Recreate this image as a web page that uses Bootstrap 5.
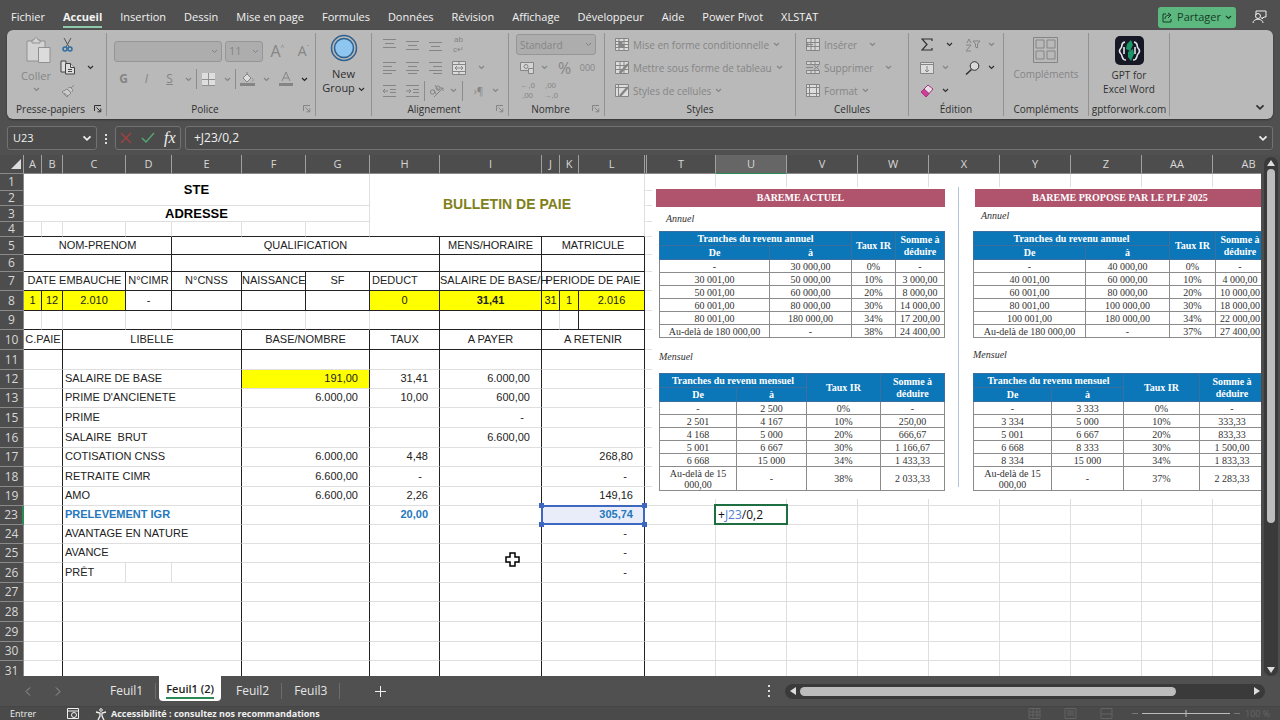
<!DOCTYPE html>
<html lang="fr">
<head>
<meta charset="utf-8">
<meta name="viewport" content="width=device-width, initial-scale=1">
<title>Bulletin de paie</title>
<link href="https://cdn.jsdelivr.net/npm/bootstrap@5.3.0/dist/css/bootstrap.min.css" rel="stylesheet">
<style>
:root{--chrome:#505050;--ribbon:#b9b9b9;--ink:#303030;--off:#858585}
body{background:var(--chrome);font-family:"Open Sans","Noto Sans",sans-serif;font-size:11px;line-height:14px;color:#f0f0f0}
button{font:inherit;color:inherit;background:none;border:0;padding:0;display:inline-flex;align-items:center;justify-content:center;flex:none}
svg{display:block;flex:none}
svg.ln{fill:none;stroke:currentColor}
.tabbar{height:30px;padding:4px 13px 0 11px}
.menu-links{gap:18px}
.menu-links a{color:#f2f2f2;text-decoration:none;white-space:nowrap;padding:3px 0 2px;border-bottom:2px solid transparent}
.menu-links a.active{font-weight:700;border-color:#8fc9ab}
.share{background:#5cb87e;color:#173d28;border-radius:3px;height:21px;width:78px;gap:4px}
.ribbon{background:var(--ribbon);border-radius:6px;margin:0 7px;height:89px;padding-top:3px;color:var(--ink);box-shadow:0 1px 2px #333;font-size:10px}
.rgroup{height:83px;border-right:1px solid #929292;display:flex;flex-direction:column;flex:none}
.gbody{height:69px;display:flex;flex:none}
.gtitle{height:14px;display:flex;align-items:center;line-height:14px;flex:none}
.gtitle span{flex:1;text-align:center;white-space:nowrap}
.gtitle svg{margin-right:4px}
.rrow{height:23px;display:flex;align-items:center}
.slot{width:23px;height:20px}
.car{width:15px;height:20px}
.vsep{width:1px;height:20px;background:#8c8c8c}
.off{color:var(--off)}
.tiny{font:8px/10px "Liberation Sans",sans-serif}
.combo{appearance:none;border:1px solid #969696;border-radius:3px;background:#adadad url("data:image/svg+xml,%3Csvg xmlns='http://www.w3.org/2000/svg' width='7' height='5'%3E%3Cpath d='M1 1l2.500 2.500L6 1' fill='none' stroke='%23808080'/%3E%3C/svg%3E") no-repeat right 3px center;height:21px;font:inherit;color:#858585;padding:0 3px;opacity:1}
.txtbtn{gap:4px;white-space:nowrap;justify-content:flex-start}
.bigbtn{flex-direction:column;justify-content:flex-start;line-height:14px}
.fbar{padding:7px 7px 0;height:36px}
.fbox{height:24px;border:1px solid #727272;border-radius:3px;background:#4b4b4b;display:flex;align-items:center}
.fbox input{background:none;border:0;color:#f0f0f0;font-size:12px;font-family:inherit;padding:0;outline:0;min-width:0}
.work{flex:1;min-height:0}
.sheet{position:relative;overflow:hidden;background:#fff;flex:1;min-width:0}
table.grid{table-layout:fixed;border-collapse:separate;border-spacing:0;width:1285px;font:11px/13px "Liberation Sans",Arial,sans-serif;color:#222}
.grid td,.grid th{padding:0;border-right:1px solid #dfdfdf;border-bottom:1px solid #dfdfdf;white-space:nowrap;text-align:center;vertical-align:middle}
.grid td{padding-bottom:1px}
.grid th{background:#4d4d4d;color:#d8d8d8;font:12px/12px "Open Sans","Noto Sans",sans-serif;border-color:#8a8a8a}
.grid thead th{font-size:11px;border-right-color:#a0a0a0;border-bottom-color:#8a8a8a}
.grid td.kr{border-right-color:#222}
.grid td.kb{border-bottom-color:#222}
.grid td.nr{border-right-color:#fff}
.grid td.yl{background:#ff0}
.grid td.lt{text-align:left;padding-left:2px}
.grid td.lt0{text-align:left}
.grid td.rt{text-align:right;padding-right:11px}
.grid td.ds{text-align:right;padding-right:17px}
.grid td.blu{color:#2478bd;font-weight:700}
.grid td.ttl{color:#000;font-size:13px;font-weight:700}
.grid td.bul{color:#80801a;font-size:14px;font-weight:700}
.grid th.cur{background:#666;border-bottom-color:#2c8a55}
.grid th.rcur{border-right:2px solid #2c8a55}
.grid td.ref{position:relative;background:#e8edf9}
.grid td.ref::before{content:"";position:absolute;inset:-1px;border:2px solid #3e68c0}
.knob{position:absolute;width:5px;height:5px;background:#3e68c0}
.grid td.edit{position:relative;font:12px/14px "Open Sans",sans-serif;text-align:left;padding:0 0 0 2px;color:#111}
.grid td.edit::before{content:"";position:absolute;inset:-2px -2px -1px -2px;border:2px solid #1d6e41}
.barem{position:absolute;left:652px;top:32px;width:620px;height:312px;background:#fff;display:flex;font:10px/12px "Liberation Serif",serif;color:#333}
.pane{flex:none;padding-top:2px}
.pane h2{background:#b0536c;color:#fff;font:700 10px/18px "Liberation Serif",serif;text-align:center;margin:0}
.pane p{font-style:italic;margin:0;line-height:24px;height:24px}
.pane p.second{padding-top:7px;height:35px}
table.rates{table-layout:fixed;border-collapse:collapse;text-align:center}
.rates td,.rates th{border:1px solid #8b8b8b;padding:0;height:13px;line-height:11px;white-space:nowrap}
.rates th{background:#0b76b8;color:#fff;border-color:#3a6fa0;height:14px;line-height:12px}
.rates td.two{white-space:normal;height:24px}
.cross{position:absolute;left:505px;top:397px}
.vscroll{width:19px;background:#4d4d4d;padding:2px 1px 0 3px}
.vtrack{background:#3a3a3a;border-radius:7px;width:14px;align-items:center}
.vthumb{width:8px;height:354px;background:#bdbdbd;border-radius:4px}
.sheettabs{height:30px}
.sheettabs a{color:#e6e6e6;text-decoration:none;font-size:12px;line-height:16px;padding:0 12px;height:16px;margin-top:7px;white-space:nowrap;border-right:1px solid #6c6c6c}
.sheettabs a.active{background:#fff;color:#222;height:25px;margin:0 3px;padding:5px 7px 0;border:0;border-radius:0 0 4px 4px}
.sheettabs a.active span{display:block;border-bottom:2px solid #2c8a55;font-weight:600;font-size:11px;height:18px}
.addtab{margin-left:35px}
.hscroll{background:#3a3a3a;border-radius:8px;height:15px;width:37.5%;margin-right:15px;padding:0 5px}
.hthumb{height:9px;width:80%;background:#bdbdbd;border-radius:5px;margin:0 auto 0 4px}
.statusbar{height:14px;background:#4a4a4a;border-top:1px solid #454545;font-size:9px;line-height:13px;padding-left:10px;overflow:hidden}
</style>
</head>
<body>
<svg width="0" height="0" class="position-absolute" aria-hidden="true">
<symbol id="cv" viewBox="0 0 7 5"><path d="M1 1l2.500 2.500L6 1" fill="none" stroke="currentColor" stroke-width="1.200"/></symbol>
<symbol id="la" viewBox="0 0 8 8"><path d="M.5 6V.5H7M2.500 2.500l4 4M6.800 3.500v3.300H3.500" fill="none" stroke="currentColor"/></symbol>
</svg>
<div class="d-flex flex-column vh-100 overflow-hidden">
<header class="tabbar d-flex align-items-center flex-shrink-0">
<nav class="menu-links d-flex me-auto" aria-label="Onglets du ruban">
<a href="#">Fichier</a><a href="#" class="active">Accueil</a><a href="#">Insertion</a><a href="#">Dessin</a><a href="#">Mise en page</a><a href="#">Formules</a><a href="#">Données</a><a href="#">Révision</a><a href="#">Affichage</a><a href="#">Développeur</a><a href="#">Aide</a><a href="#">Power Pivot</a><a href="#">XLSTAT</a>
</nav>
<button class="share me-3"><svg class="ln" width="11" height="11" viewBox="0 0 11 11"><path d="M4 2H1v8h8V7M3 7c0-3 2-4 5-4M6 1l3 2-3 3"/></svg>Partager<svg width="7" height="5"><use href="#cv"/></svg></button>
<button aria-label="Commentaires"><svg class="ln" width="15" height="14" viewBox="0 0 15 14"><path d="M4 5V1h10v6h-2l-2 2V7"/><circle cx="6" cy="6" r="2.500"/><path d="M1 13c0-5 10-5 10 0"/></svg></button>
</header>

<section class="ribbon d-flex flex-shrink-0" aria-label="Ruban">
<div class="rgroup" style="width:100px">
 <div class="gbody">
  <button class="bigbtn off" style="width:58px"><svg width="26" height="28" viewBox="0 0 26 28" class="mt-1 ms-1" fill="#d3d3d3" stroke="#909090"><path d="M2 4h18v20H2z"/><path d="M7 6V3h2c0-3 4-3 4 0h2v3z"/><path d="M13.500 10.500h11.500v15H13.500z" fill="#dcdcdc"/></svg><span class="mt-1" style="font-size:11px">Coller</span><svg width="7" height="5" class="mt-1"><use href="#cv"/></svg></button>
  <div class="d-flex flex-column" style="margin-left:-9px">
   <div class="rrow"><button class="slot" aria-label="Couper"><svg width="11" height="15" viewBox="0 0 11 15" fill="none" stroke="#555"><path d="M2 1l5 9M9 1l-5 9"/><circle cx="3" cy="12" r="2" stroke="#2f6da5" stroke-width="1.500"/><circle cx="8" cy="12" r="2" stroke="#2f6da5" stroke-width="1.500"/></svg></button></div>
   <div class="rrow"><button class="slot" aria-label="Copier"><svg width="16" height="15" viewBox="0 0 16 15" fill="#ddd" stroke="#444"><path d="M5 12H1V1h5v2"/><path d="M5.500 3.500h5l4 4v6.500h-9z"/><path d="M10.500 3.500v4h4M8 9.500h4M8 11.500h4"/></svg></button><button class="car ms-1" aria-label="Options de copie"><svg width="7" height="5"><use href="#cv"/></svg></button></div>
   <div class="rrow"><button class="slot off" aria-label="Reproduire la mise en forme"><svg width="14" height="14" viewBox="0 0 14 14" fill="#ccc" stroke="#8a8a8a"><path d="M1 8l5-3 4 4-4 4zM7 4l2-1 3 3-1 2M10 4l3-3M3 9l4 3"/></svg></button></div>
  </div>
 </div>
 <div class="gtitle"><span>Presse-papiers</span><svg width="8" height="8"><use href="#la"/></svg></div>
</div>
<div class="rgroup" style="width:209px">
 <div class="gbody flex-column off" style="padding:8px 0 0 7px">
  <div class="d-flex align-items-center mb-2" style="height:20px;gap:3px"><select class="combo" style="width:108px" aria-label="Police"><option></option></select><select class="combo" style="width:38px;font-size:11px" aria-label="Taille"><option>11</option></select><button class="slot fs-6" aria-label="Agrandir">A<sup style="font-size:7px">^</sup></button><button class="slot" style="font-size:14px" aria-label="Réduire">A<sup style="font-size:7px">ˇ</sup></button></div>
  <div class="d-flex align-items-center" style="height:20px;font-size:12px;margin-left:-2px"><button class="slot fw-bold">G</button><button class="slot fst-italic">I</button><button class="slot text-decoration-underline">S</button><button class="car" aria-label="Soulignement"><svg width="7" height="5"><use href="#cv"/></svg></button><i class="vsep"></i><button class="slot" aria-label="Bordures"><svg width="13" height="13" viewBox="0 0 13 13"><path fill="#dedede" d="M0 0h13v13H0z"/><path d="M6.500 0v13M0 6.500h13M0 12.500h13" stroke="#909090"/></svg></button><button class="car" aria-label="Choix de bordure"><svg width="7" height="5"><use href="#cv"/></svg></button><i class="vsep"></i><button class="slot" aria-label="Remplissage"><svg width="15" height="15" viewBox="0 0 15 15"><path d="M3 6l4-4 4 4-4 4zM7 2V0M12 6c2 2 1 3 0 3" fill="#ddd" stroke="#858585"/><path fill="#858585" d="M0 11h15v3H0z"/></svg></button><button class="car" aria-label="Couleur de remplissage"><svg width="7" height="5"><use href="#cv"/></svg></button><button class="slot" aria-label="Couleur de police"><svg class="ln" width="14" height="15" viewBox="0 0 14 15"><path d="M3 9l4-9 4 9M4.500 6h5"/><path fill="#858585" stroke="none" d="M0 11h14v3H0z"/></svg></button><button class="car text-dark" aria-label="Choix de couleur"><svg width="7" height="5"><use href="#cv"/></svg></button></div>
 </div>
 <div class="gtitle"><span>Police</span><svg width="8" height="8" class="off"><use href="#la"/></svg></div>
</div>
<div class="rgroup" style="width:56px">
 <button class="bigbtn" style="font-size:11px"><svg width="28" height="30" viewBox="0 0 28 30" fill="none" stroke="#2b6090" stroke-width="1.500"><circle cx="14" cy="15" r="12.500"/><circle cx="14" cy="15" r="9.500" fill="#8ec6ef"/></svg><span class="mt-1">New<br>Group <svg class="d-inline" width="7" height="5"><use href="#cv"/></svg></span></button>
</div>
<div class="rgroup" style="width:137px">
 <div class="gbody flex-column off" style="padding-left:6px">
  <div class="rrow"><button class="slot" aria-label="Haut"><svg class="ln" width="13" height="12"><path d="M0 .5h13M2 4.500h9M0 8.500h13"/></svg></button><button class="slot" aria-label="Milieu"><svg class="ln" width="13" height="12"><path d="M0 2.500h13M2 6.500h9M0 10.500h13"/></svg></button><button class="slot" aria-label="Bas"><svg class="ln" width="13" height="12"><path d="M0 3.500h13M2 7.500h9M0 11.500h13"/></svg></button><button class="slot tiny" aria-label="Renvoi à la ligne">ab<br>c↵</button></div>
  <div class="rrow"><button class="slot" aria-label="Gauche"><svg class="ln" width="13" height="12"><path d="M0 .5h13M0 4.500h9M0 8.500h13M0 11.500h9"/></svg></button><button class="slot" aria-label="Centre"><svg class="ln" width="13" height="12"><path d="M0 .5h13M2 4.500h9M0 8.500h13M2 11.500h9"/></svg></button><button class="slot" aria-label="Droite"><svg class="ln" width="13" height="12"><path d="M0 .5h13M4 4.500h9M0 8.500h13M4 11.500h9"/></svg></button><button class="slot" aria-label="Fusionner"><svg class="ln" width="14" height="14" viewBox="0 0 14 14"><path d="M.5.5h13v13H.5z" fill="#dcdcdc"/><path d="M.5 3.500h13M.5 10.500h13M7 .5v3M7 10.500v3M3 7h8M5 5L3 7l2 2M9 5l2 2-2 2"/></svg></button><button class="car ms-1" aria-label="Choix de fusion"><svg width="7" height="5"><use href="#cv"/></svg></button></div>
  <div class="rrow"><button class="slot" aria-label="Diminuer le retrait"><svg class="ln" width="13" height="12"><path d="M0 .5h13M7 4.500h6M7 7.500h6M0 11.500h13M5 6H0M2 4L0 6l2 2"/></svg></button><button class="slot" aria-label="Augmenter le retrait"><svg class="ln" width="13" height="12"><path d="M0 .5h13M7 4.500h6M7 7.500h6M0 11.500h13M5 6H0M3 4l2 2-2 2"/></svg></button><i class="vsep"></i><button class="slot" aria-label="Orientation"><svg class="ln" width="15" height="13" viewBox="0 0 15 13"><circle cx="3.500" cy="8" r="2.200"/><path d="M5 6l2 4M6 1l4 6M5 13L14 4M11 4h3v3"/><circle cx="9" cy="4" r="2"/></svg></button><button class="car" aria-label="Choix d'orientation" style="width:10px"><svg width="7" height="5"><use href="#cv"/></svg></button><i class="vsep ms-1"></i><button class="slot ms-1" aria-label="Sens du texte">›¶</button><button class="car" aria-label="Choix du sens" style="width:10px"><svg width="7" height="5"><use href="#cv"/></svg></button></div>
 </div>
 <div class="gtitle"><span>Alignement</span><svg width="8" height="8" class="off"><use href="#la"/></svg></div>
</div>
<div class="rgroup" style="width:96px">
 <div class="gbody flex-column off" style="padding-left:7px">
  <div class="rrow"><select class="combo" style="width:80px" aria-label="Format de nombre"><option>Standard</option></select></div>
  <div class="rrow"><button class="slot" aria-label="Monétaire"><svg class="ln" width="15" height="12" viewBox="0 0 15 12"><path d="M.5.5h13v8H.5z" fill="#d4d4d4"/><circle cx="6" cy="4.500" r="2"/><path d="M8.500 6.500h5v5h-5z" fill="#d4d4d4"/></svg></button><button class="car" aria-label="Choix de devise" style="width:10px"><svg width="7" height="5"><use href="#cv"/></svg></button><button class="slot fs-6 ms-1">%</button><button class="slot" style="font-size:9px">000</button></div>
  <div class="rrow"><button class="slot tiny">←,0<br>,00</button><button class="slot tiny">,00<br>→,0</button></div>
 </div>
 <div class="gtitle"><span>Nombre</span><svg width="8" height="8" class="off"><use href="#la"/></svg></div>
</div>
<div class="rgroup" style="width:191px">
 <div class="gbody flex-column off" style="padding-left:10px">
  <div class="rrow"><button class="txtbtn"><svg class="ln" width="14" height="13" viewBox="0 0 14 13"><path d="M.5.5h13v12H.5z" fill="#ddd"/><path d="M.5 3.500h13M.5 6.500h13M.5 9.500h13M4 .5v12M9 .5v12"/><path d="M4 4h3v2H4zM4 7h5v2H4z" fill="#888"/></svg>Mise en forme conditionnelle<svg width="7" height="5"><use href="#cv"/></svg></button></div>
  <div class="rrow"><button class="txtbtn"><svg class="ln" width="14" height="13" viewBox="0 0 14 13"><path d="M.5.5h13v12H.5z" fill="#ddd"/><path d="M.5 4.500h13M.5 8.500h13M5 .5v12M9 .5v12"/><path d="M5 12l8-9" stroke-width="2.500"/></svg>Mettre sous forme de tableau<svg width="7" height="5"><use href="#cv"/></svg></button></div>
  <div class="rrow"><button class="txtbtn"><svg class="ln" width="14" height="13" viewBox="0 0 14 13"><path d="M.5.5h13v12H.5z" fill="#ddd"/><path d="M.5 3.500h13M3.500 .5v12"/><path d="M5 12l8-9" stroke-width="2.500"/></svg>Styles de cellules<svg width="7" height="5"><use href="#cv"/></svg></button></div>
 </div>
 <div class="gtitle"><span>Styles</span></div>
</div>
<div class="rgroup" style="width:113px">
 <div class="gbody flex-column off" style="padding-left:10px">
  <div class="rrow"><button class="txtbtn"><svg class="ln" width="14" height="13" viewBox="0 0 14 13"><path d="M.5.5h13v12H.5z" fill="#d5d5d5"/><path d="M.5 4.500h13M.5 8.500h13M5 .5v12M9 .5v12M7 6.500H1M3 4L1 6.500 3 9"/></svg>Insérer<svg width="7" height="5" class="ms-2"><use href="#cv"/></svg></button></div>
  <div class="rrow"><button class="txtbtn"><svg class="ln" width="14" height="13" viewBox="0 0 14 13"><path d="M.5.5h13v3H.5zM.5 9.500h13v3H.5zM5 .5v3M9 .5v3M5 9.500v3M9 9.500v3M0 6.500h7M8 4.500l5 4M13 4.500l-5 4" fill="#d5d5d5"/></svg>Supprimer<svg width="7" height="5" class="ms-2"><use href="#cv"/></svg></button></div>
  <div class="rrow"><button class="txtbtn"><svg class="ln" width="14" height="13" viewBox="0 0 14 13"><path d="M.5.5h13v12H.5z" fill="#ddd"/><path d="M.5 3.500h13M.5 9.500h13M3.500 .5v12M10.500 .5v12"/></svg>Format<svg width="7" height="5"><use href="#cv"/></svg></button></div>
 </div>
 <div class="gtitle"><span>Cellules</span></div>
</div>
<div class="rgroup" style="width:95px">
 <div class="gbody flex-column" style="padding-left:6px">
  <div class="rrow"><button class="slot" aria-label="Somme"><svg class="ln" width="12" height="13" viewBox="0 0 12 13"><path d="M11 3V1H1l5 5.500L1 12h10v-2" stroke-width="1.200"/></svg></button><button class="car ms-1" aria-label="Fonctions"><svg width="7" height="5"><use href="#cv"/></svg></button><button class="slot off ms-1" aria-label="Trier et filtrer"><svg class="ln" width="16" height="14" viewBox="0 0 16 14"><path d="M1 7h5L1 13h5M2 5l2-4 2 4M8 3h7l-2.500 3v4l-2-1V6z"/></svg></button><button class="car off" aria-label="Choix de tri"><svg width="7" height="5"><use href="#cv"/></svg></button></div>
  <div class="rrow"><button class="slot off" aria-label="Remplissage"><svg class="ln" width="14" height="12" viewBox="0 0 14 12"><path d="M.5.5h13v11H.5z" fill="#ddd"/><path d="M.5 2.500h13M7 4v6M5 8l2 2 2-2"/></svg></button><button class="car off" aria-label="Choix de remplissage"><svg width="7" height="5"><use href="#cv"/></svg></button><button class="slot ms-2" aria-label="Rechercher"><svg class="ln" width="15" height="14" viewBox="0 0 15 14"><circle cx="9.500" cy="5" r="4.300" fill="#d8d8d8"/><path d="M6.500 8.500L1 13.500" stroke-width="1.500"/></svg></button><button class="car" aria-label="Choix de recherche"><svg width="7" height="5"><use href="#cv"/></svg></button></div>
  <div class="rrow"><button class="slot" aria-label="Effacer"><svg width="14" height="14" viewBox="0 0 14 14" stroke="#a8337e"><path d="M1 8l7-7 5 4-7 8z" fill="#e6dfe4"/><path d="M1 8l3-3 5 4.500-3 3.500z" fill="#cf3f9a"/></svg></button><button class="car" aria-label="Choix d'effacement"><svg width="7" height="5"><use href="#cv"/></svg></button></div>
 </div>
 <div class="gtitle"><span>Édition</span></div>
</div>
<div class="rgroup" style="width:85px">
 <div class="gbody justify-content-center"><button class="bigbtn off"><svg class="ln mt-1" width="25" height="26" viewBox="0 0 25 26"><path d="M.5.5h24v25H.5zM3 3h8v8H3zM14 3h8v8h-8zM3 14h8v8H3zM14 14h8v8h-8z"/></svg><span class="mt-1">Compléments</span></button></div>
 <div class="gtitle"><span>Compléments</span></div>
</div>
<div class="rgroup" style="width:81px">
 <div class="gbody justify-content-center"><button class="bigbtn"><svg width="29" height="29" viewBox="0 0 29 29" style="margin-top:3px"><rect width="29" height="29" rx="5" fill="#171826"/><path d="M10 6C5 7 8 10 6 12s-2 4 0 6 0 6 5 6M19 6c5 1 2 4 4 6s2 4 0 6 0 6-5 6M9 11v7M20 11v7" fill="none" stroke="#e2e6ea" stroke-width="1.600"/><path d="M16 4l2 5-3 6-4-2 1-5zM13 16l5-3 1 5-3 7-3-4z" fill="#199566"/></svg><span class="text-nowrap" style="margin-top:3px">GPT for<br>Excel Word</span></button></div>
 <div class="gtitle"><span>gptforwork.com</span></div>
</div>
<button class="ms-auto align-self-end me-2 mb-2" aria-label="Réduire le ruban"><svg width="10" height="7" viewBox="0 0 7 5"><use href="#cv"/></svg></button>
</section>

<section class="fbar d-flex flex-shrink-0" aria-label="Barre de formule">
<div class="fbox" style="width:90px"><input class="flex-fill" style="width:60px;margin-left:5px;font-size:11px" aria-label="Zone Nom" value="U23"><button class="me-1" aria-label="Noms"><svg width="10" height="7"><use href="#cv"/></svg></button></div>
<svg width="18" height="24"><path d="M9 8v2M9 12v2M9 16v2" stroke="#ddd" stroke-width="2"/></svg>
<div class="fbox justify-content-around" style="width:66px"><button aria-label="Annuler"><svg width="12" height="12" class="ln"><path d="M1 1l10 10M11 1L1 11" stroke="#a84040" stroke-width="1.300"/></svg></button><button aria-label="Entrer"><svg width="14" height="12" class="ln"><path d="M1 6l4 4L13 1" stroke="#55a573" stroke-width="1.500"/></svg></button><button aria-label="Insérer une fonction" style="font:italic 16px/16px 'Liberation Serif',serif">fx</button></div>
<div class="fbox ms-1 flex-fill px-1"><input class="flex-fill ms-1" aria-label="Formule" value="+J23/0,2"><button aria-label="Développer"><svg width="10" height="7"><use href="#cv"/></svg></button></div>
</section>

<main class="work d-flex">
<div class="sheet">
<table class="grid"><colgroup id="cols"></colgroup><thead><tr id="head"></tr></thead><tbody id="rows"></tbody></table>
<div class="barem">
 <div class="pane" style="width:293px;padding-left:4px">
  <h2>BAREME ACTUEL</h2><p style="padding-left:10px">Annuel</p>
  <table class="rates" style="width:286px;margin-left:3px"><colgroup><col style="width:110px"><col style="width:82px"><col style="width:44px"><col></colgroup>
  <tr><th colspan="2">Tranches du revenu annuel<th rowspan="2">Taux IR<th rowspan="2">Somme à<br>déduire<tr><th>De<th>à
  <tr><td>-<td>30 000,00<td>0%<td>-<tr><td>30 001,00<td>50 000,00<td>10%<td>3 000,00<tr><td>50 001,00<td>60 000,00<td>20%<td>8 000,00<tr><td>60 001,00<td>80 000,00<td>30%<td>14 000,00<tr><td>80 001,00<td>180 000,00<td>34%<td>17 200,00<tr><td>Au-delà de 180 000,00<td>-<td>38%<td>24 400,00</table>
  <p class="second" style="padding-left:3px">Mensuel</p>
  <table class="rates" style="width:286px;margin-left:3px"><colgroup><col style="width:77px"><col style="width:70px"><col style="width:74px"><col></colgroup>
  <tr><th colspan="2">Tranches du revenu mensuel<th rowspan="2">Taux IR<th rowspan="2">Somme à<br>déduire<tr><th>De<th>à
  <tr><td>-<td>2 500<td>0%<td>-<tr><td>2 501<td>4 167<td>10%<td>250,00<tr><td>4 168<td>5 000<td>20%<td>666,67<tr><td>5 001<td>6 667<td>30%<td>1 166,67<tr><td>6 668<td>15 000<td>34%<td>1 433,33<tr><td class="two">Au-delà de 15<br>000,00<td>-<td>38%<td>2 033,33</table>
 </div>
 <div style="width:14px;height:300px;border-right:1px solid #b4c4dc"></div>
 <div class="pane" style="width:306px;padding-left:14px">
  <h2 style="margin-left:2px">BAREME PROPOSE PAR LE PLF 2025</h2><p style="padding-left:8px;line-height:18px">Annuel</p>
  <table class="rates" style="width:292px"><colgroup><col style="width:112px"><col style="width:84px"><col style="width:46px"><col></colgroup>
  <tr><th colspan="2">Tranches du revenu annuel<th rowspan="2">Taux IR<th rowspan="2">Somme à<br>déduire<tr><th>De<th>à
  <tr><td>-<td>40 000,00<td>0%<td>-<tr><td>40 001,00<td>60 000,00<td>10%<td>4 000,00<tr><td>60 001,00<td>80 000,00<td>20%<td>10 000,00<tr><td>80 001,00<td>100 000,00<td>30%<td>18 000,00<tr><td>100 001,00<td>180 000,00<td>34%<td>22 000,00<tr><td>Au-delà de 180 000,00<td>-<td>37%<td>27 400,00</table>
  <p class="second" style="line-height:20px">Mensuel</p>
  <table class="rates" style="width:292px"><colgroup><col style="width:78px"><col style="width:72px"><col style="width:76px"><col></colgroup>
  <tr><th colspan="2">Tranches du revenu mensuel<th rowspan="2">Taux IR<th rowspan="2">Somme à<br>déduire<tr><th>De<th>à
  <tr><td>-<td>3 333<td>0%<td>-<tr><td>3 334<td>5 000<td>10%<td>333,33<tr><td>5 001<td>6 667<td>20%<td>833,33<tr><td>6 668<td>8 333<td>30%<td>1 500,00<tr><td>8 334<td>15 000<td>34%<td>1 833,33<tr><td class="two">Au-delà de 15<br>000,00<td>-<td>37%<td>2 283,33</table>
 </div>
</div>
<svg class="cross" width="15" height="15" viewBox="0 0 15 15"><path d="M5 1h5v4h4v5h-4v4H5v-4H1V5h4z" fill="#fff" stroke="#000" stroke-width="1.500"/></svg>
</div>
<div class="vscroll d-flex"><div class="vtrack d-flex flex-column"><svg width="8" height="12"><path d="M4 3l4 6H0z" fill="#ddd"/></svg><div class="vthumb"></div><svg width="8" height="12" class="mt-auto"><path d="M4 9l4-6H0z" fill="#ddd"/></svg></div></div>
</main>

<footer class="flex-shrink-0">
<div class="sheettabs d-flex">
<button class="ms-4" aria-label="Précédent"><svg class="ln" width="7" height="9" viewBox="0 0 7 9"><path d="M6 .5l-4 4 4 4" stroke="#999"/></svg></button><button class="ms-4" style="margin-right:36px" aria-label="Suivant"><svg class="ln" width="7" height="9" viewBox="0 0 7 9"><path d="M1 .5l4 4-4 4" stroke="#999"/></svg></button>
<a href="#">Feuil1</a><a href="#" class="active"><span>Feuil1 (2)</span></a><a href="#">Feuil2</a><a href="#">Feuil3</a>
<button class="addtab me-auto" aria-label="Nouvelle feuille"><svg class="ln" width="11" height="11"><path d="M5.500 0v11M0 5.500h11"/></svg></button>
<svg width="24" height="30"><path d="M8 9v2M8 14v2M8 19v2" stroke="#ddd" stroke-width="2"/></svg>
<div class="hscroll d-flex align-items-center align-self-center"><svg width="6" height="8"><path d="M6 0v8L0 4z" fill="#ddd"/></svg><div class="hthumb"></div><svg width="6" height="8"><path d="M0 0v8l6-4z" fill="#ddd"/></svg></div>
</div>
<div class="statusbar d-flex align-items-center">
<span style="width:57px">Entrer</span><svg class="ln" width="12" height="11" viewBox="0 0 12 11"><path d="M.5.5h11v10H.5zM.5 3h11"/><circle cx="7" cy="7" r="2.500"/></svg><svg class="ln ms-3" width="12" height="12" viewBox="0 0 12 12"><circle cx="6" cy="2" r="1.300"/><path d="M1 4l4 1v3l-2 4M11 4L7 5v3l2 4" stroke-width="1.300"/></svg><span class="fw-bold ms-1 me-auto">Accessibilité : consultez nos recommandations</span>
<svg class="ln" width="102" height="11"><path stroke="#626262" d="M6 .5h11v10H6zM6 4h11M6 7h11M10 0v11M14 0v11M42 .5h11v10H42zM44 3h7M44 5h7M44 7h7M78 .5h11v10H78zM78 6h11"/></svg>
<svg width="120" height="11" class="ln"><path stroke="#777" d="M7 5.500h6M109 5.500h6"/><path stroke="#bbb" d="M17 5.500h88M61 2v7"/></svg><span style="color:#666;width:35px">100 %</span>
</div>
</footer>
</div>
<script>
const widths=[24,18,21,63,46,70,64,64,70,102,18,19,66,2,69,71,71,71,71,71,71,71,72];
const names=['','A','B','C','D','E','F','G','H','I','J','K','L','','T','U','V','W','X','Y','Z','AA','AB'];
cols.innerHTML=widths.map(w=>`<col style="width:${w}px">`).join('');
head.innerHTML=names.map((n,i)=>`<th scope="col" style="height:19px" class="${n==='U'?'cur':''}">${i?n:'<svg width="10" height="10" style="margin-left:11px"><path d="M10 0v10H0z" fill="#ddd"/></svg>'}</th>`).join('');
// Cell: [text, classes, colspan, rowspan]
const body=(lib,base,taux,pay,ret)=>[['','kr',2],[lib,'kr lt',3],[base||'','kr rt',2],[taux||'','kr rt'],[pay||'','kr rt'],[ret||'','kr rt',3]];
const box5=(a,b,c,d)=>[[a,'kr kb',4],[b,'kr kb',4],[c,'kr kb'],[d,'kr kb',3]];
const data=[
[1,17,[['STE','ttl',7,2],['BULLETIN DE PAIE','bul kb',5,4]]],
[2,15,[]],
[3,16,[['ADRESSE','ttl',7]]],
[4,15,Array(7).fill(['','kb'])],
[5,18,box5('NOM-PRENOM','QUALIFICATION','MENS/HORAIRE','MATRICULE')],
[6,17,box5('','','','')],
[7,19,[['DATE EMBAUCHE','kr kb',3],['N°CIMR','kr kb'],['N°CNSS','kr kb'],['NAISSANCE','kr kb'],['SF','kr kb'],['DEDUCT','kr kb lt'],['SALAIRE DE BASE/H','kr kb lt0'],['PERIODE DE PAIE','kr kb',3]]],
[8,20,[['1','kr kb yl'],['12','kr kb yl'],['2.010','kr kb yl'],['-','kr kb'],['','kr kb'],['','kr kb'],['','kr kb'],['0','kr kb yl'],['<b>31,41</b>','kr kb yl'],['31','kr kb yl'],['1','kr kb yl'],['2.016','kr kb yl']]],
[9,19,[...Array(7).fill(['','kb']),['','kr kb'],['','kr kb'],['','kb'],['','kr kb'],['','kr kb']]],
[10,20,[['C.PAIE','kr kb',2],['LIBELLE','kr kb',3],['BASE/NOMBRE','kr kb',2],['TAUX','kr kb'],['A PAYER','kr kb'],['A RETENIR','kr kb',3]]],
[11,20,body('')],
[12,19,body('SALAIRE DE BASE','191,00','31,41','6.000,00')],
[13,19,body("PRIME D'ANCIENETE",'6.000,00','10,00','600,00')],
[15,20,body('PRIME','','','-')],
[16,20,body('SALAIRE&nbsp; BRUT','','','6.600,00')],
[17,19,body('COTISATION CNSS','6.000,00','4,48','','268,80')],
[18,20,body('RETRAITE CIMR','6.600,00','-','','-')],
[19,19,body('AMO','6.600,00','2,26','','149,16')],
[23,19,body('PRELEVEMENT IGR','','20,00','','305,74')],
[24,19,body('AVANTAGE EN NATURE','','','','-')],
[25,19,body('AVANCE','','','','-')],
[26,20,[['','kr',2],['PRÊT','lt'],['',''],['','kr'],['','kr',2],['','kr'],['','kr'],['-','kr ds',3]]],
[27,19,body('')],[28,20,body('')],[29,20,body('')],[30,19,body('')],[31,20,body('')]];
const knobs='<i class="knob" style="left:-3px;top:-3px"></i><i class="knob" style="right:-3px;top:-3px"></i><i class="knob" style="left:-3px;bottom:-3px"></i><i class="knob" style="right:-3px;bottom:-3px"></i>';
rows.innerHTML=data.map(([n,h,cells])=>{
 let s=`<tr><th scope="row" class="${n===23?'rcur':''}" style="height:${h}px">${n}</th>`;
 cells.forEach(([t,c,cs=1,rs=1],i)=>{
  if(t==='-'&&c.includes('rt'))c=c.replace('rt','ds');
  if(n===12&&i===2)c+=' yl';
  if(n===23){c+=' blu';if(i===5){c+=' ref';t+=knobs}}
  s+=`<td class="${c}" colspan="${cs}" rowspan="${rs}">${t}</td>`});
 for(let i=0;i<10;i++)s+=n===23&&i===2?'<td class="edit">+<span style="color:#4d7fd6">J23</span>/0,2</td>':`<td class="${i?'':'nr'}"></td>`;
 return s+'</tr>'}).join('');
</script>
<script src="https://cdn.jsdelivr.net/npm/bootstrap@5.3.0/dist/js/bootstrap.bundle.min.js"></script>
</body>
</html>
